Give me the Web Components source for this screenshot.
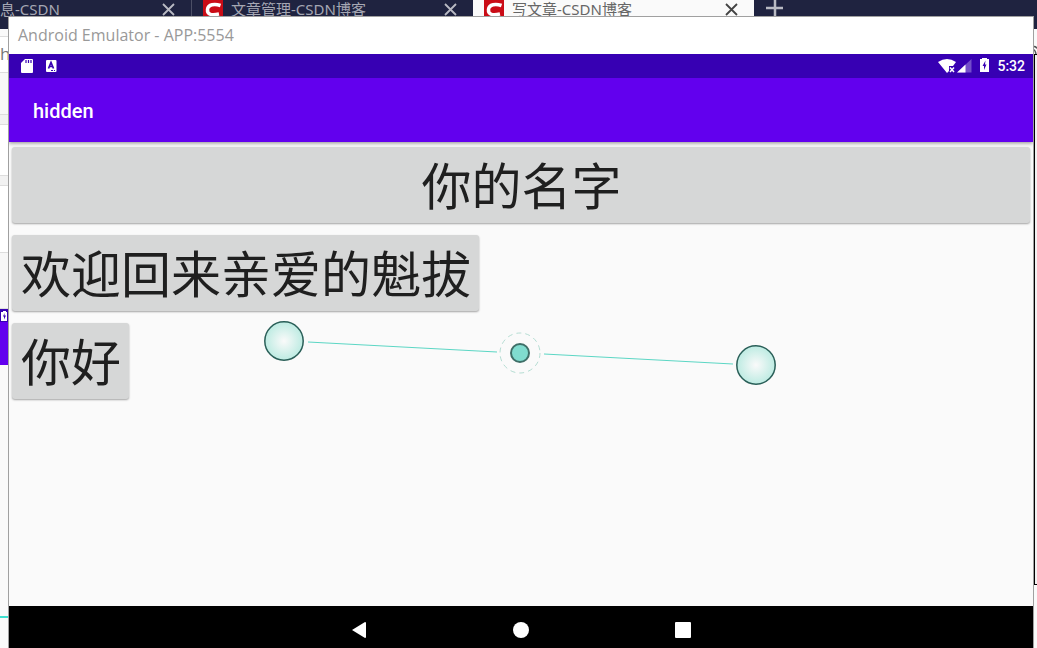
<!DOCTYPE html>
<html lang="zh-CN">
<head>
<meta charset="utf-8">
<title>Android Emulator</title>
<style>
    html, body {
        height: 100%;
        margin: 0;
    }
    body {
        position: relative;
        overflow: hidden;
        background: #fafafa;
        font-family: "Open Sans", "Noto Sans CJK SC", sans-serif;
    }
</style>
</head>
<body>
<browser-window>
    <browser-tab slot="tab" class="first">息-CSDN</browser-tab>
    <browser-tab slot="tab" icon>文章管理-CSDN博客</browser-tab>
    <browser-tab slot="tab" icon active>写文章-CSDN博客</browser-tab>
</browser-window>
<emulator-window caption="Android Emulator - APP:5554">
    <status-bar time="5:32"></status-bar>
    <app-bar>hidden</app-bar>
    <app-content>
        <android-button wide>你的名字</android-button>
        <android-button>欢迎回来亲爱的魁拔</android-button>
        <android-button>你好</android-button>
        <touch-points slot="overlay"></touch-points>
    </app-content>
    <nav-bar></nav-bar>
</emulator-window>

<script>
class BrowserTab extends HTMLElement {
    constructor() {
        super();
        this.attachShadow({ mode: 'open' });
        this.shadowRoot.innerHTML = `
            <style>
            :host {
                display: flex;
                box-sizing: border-box;
                align-items: center;
                width: 281px;
                height: 18px;
                padding: 0 15px 0 11px;
                color: #a5a7b3;
                font: 15px/18px "Noto Sans", "Noto Sans CJK SC", sans-serif;
                white-space: nowrap;
            }
            :host(.first) {
                width: 192px;
                padding-left: 0;
                border-right: 1px solid #4c4f66;
            }
            :host([active]) {
                height: 29px;
                padding-bottom: 11px;
                background: #fafafa;
                color: #666;
            }
            .favicon {
                flex: none;
                margin-right: 8px;
            }
            .label {
                flex: 1;
            }
            button {
                display: flex;
                padding: 0;
                border: 0;
                background: none;
                color: #b9bac3;
            }
            :host([active]) button {
                color: #444;
            }
            </style>
            ${this.hasAttribute('icon') ? `
            <svg class="favicon" width="20" height="20" viewBox="0 0 20 20">
                <rect width="20" height="20" fill="#ca0c16"/>
                <path d="M17.500 6.500C12 4.500 5 5 4.500 10.500C4 16 9 16.500 16 15" fill="none" stroke="#fff" stroke-width="3.500"/>
            </svg>` : ''}
            <span class="label"><slot></slot></span>
            <button aria-label="关闭">
                <svg width="16" height="16" viewBox="0 0 16 16">
                    <path d="M3 3L14 14M14 3L3 14" stroke="currentColor" stroke-width="1.800"/>
                </svg>
            </button>
        `;
    }
}
customElements.define('browser-tab', BrowserTab);

class BrowserWindow extends HTMLElement {
    constructor() {
        super();
        this.attachShadow({ mode: 'open' });
        this.shadowRoot.innerHTML = `
            <style>
            :host {
                display: flex;
                flex-direction: column;
                height: 100%;
            }
            .tabs {
                display: flex;
                height: 29px;
                background: #1f2340;
            }
            .add {
                align-self: flex-start;
                margin-left: 11px;
                padding: 0;
                border: 0;
                background: none;
                color: #b9bac3;
            }
            .add svg {
                display: block;
            }
            .page {
                display: flex;
                flex: 1;
                justify-content: space-between;
            }
            .left {
                width: 9px;
                overflow: hidden;
            }
            .left div {
                box-sizing: border-box;
                border-bottom: 1px solid #ddd;
            }
            .gap { height: 8px; }
            .address {
                height: 36px;
                background: #fff;
                color: #777;
                font-size: 17px;
                line-height: 34px;
            }
            .menu { height: 42px; background: #f8f8f8; }
            .rule { height: 10px; background: #f2f2f2; }
            .title { height: 51px; background: #fff; }
            .editor { height: 67px; background: #fff; }
            .tools { height: 56px; background: #f7f7f7; }
            .left .thumb {
                height: 56px;
                border: 0;
                border-top: 13px solid #3700b3;
                background: #6200ee;
            }
            .left .thumb svg {
                display: block;
                margin-top: -12px;
            }
            .left .end {
                height: 253px;
                border-bottom: 2px solid #40e0d0;
            }
            .right {
                width: 3px;
                overflow: hidden;
            }
            .right svg {
                display: block;
                margin-top: 16px;
            }
            .preview {
                height: 531px;
                box-sizing: border-box;
                border: solid #000;
                border-width: 1px 0 1px 1px;
                background: #f2f2f2;
            }
            </style>
            <div class="tabs">
                <slot name="tab"></slot>
                <button class="add" aria-label="新标签页">
                    <svg width="18" height="18" viewBox="0 0 18 18">
                        <path d="M1 8H18M10 0V16" stroke="currentColor" stroke-width="2.500"/>
                    </svg>
                </button>
            </div>
            <div class="page">
                <div class="left">
                    <div class="gap"></div>
                    <div class="address">h</div>
                    <div class="menu"></div>
                    <div class="rule"></div>
                    <div class="title"></div>
                    <div class="rule"></div>
                    <div class="editor"></div>
                    <div class="tools"></div>
                    <div class="thumb">
                        <svg width="8" height="12" viewBox="0 0 8 12">
                            <path d="M1 2H3V1H6V2H7V11H1Z" fill="#fff"/>
                            <path d="M4.500 3L3 6.500H4V9.500L6 5.500H4.500Z" fill="#3700b3"/>
                        </svg>
                    </div>
                    <div class="end"></div>
                </div>
                <div class="right">
                    <svg width="3" height="9" viewBox="0 0 3 9">
                        <path d="M0 1.500Q2 1.500 3 3.500M0 5Q1 5 2 9" fill="none" stroke="#555" stroke-width="1.500"/>
                    </svg>
                    <div class="preview"></div>
                </div>
            </div>
        `;
    }
}
customElements.define('browser-window', BrowserWindow);

// floats above the browser, the lower edge runs off the screen
class EmulatorWindow extends HTMLElement {
    constructor() {
        super();
        this.attachShadow({ mode: 'open' });
        this.shadowRoot.innerHTML = `
            <style>
            :host {
                position: absolute;
                inset: 16px 3px 0 8px;
                display: flex;
                flex-direction: column;
                border: 1px solid #a0a0a0;
                border-bottom: 0;
                background: #fff;
            }
            .caption {
                padding: 0 9px;
                color: #999;
                font-size: 16px;
                line-height: 37px;
            }
            </style>
            <div class="caption"></div>
            <slot></slot>
        `;
        this.shadowRoot.querySelector('.caption').textContent = this.getAttribute('caption');
    }
}
customElements.define('emulator-window', EmulatorWindow);

class StatusBar extends HTMLElement {
    constructor() {
        super();
        this.attachShadow({ mode: 'open' });
        this.shadowRoot.innerHTML = `
            <style>
            :host {
                display: flex;
                align-items: center;
                height: 24px;
                padding: 0 8px 0 12px;
                background: #3700b3;
                color: #fff;
                font: 500 14px/24px Roboto, sans-serif;
            }
            .notices {
                display: flex;
                flex: 1;
                gap: 12px;
            }
            .system {
                display: flex;
                gap: 1px;
                margin-right: 7px;
            }
            </style>
            <div class="notices">
                <svg width="12" height="14" viewBox="0 0 12 14">
                    <path d="M4 0H11Q12 0 12 1V13Q12 14 11 14H1Q0 14 0 13V4Z" fill="#fff"/>
                    <path d="M5 1V4M7.500 1V4M10 1V4" stroke="#3700b3" stroke-width="1.200"/>
                </svg>
                <svg width="12" height="14" viewBox="0 0 12 14">
                    <rect x="1" y="1" width="10.500" height="12" rx="1" fill="#fff"/>
                    <path d="M3.500 9.500L6 3.500L8.500 9.500M4.500 7.500H7.500" fill="none" stroke="#3700b3" stroke-width="1.700"/>
                    <path d="M6 11.500H8M9 11.500H10" stroke="#3700b3"/>
                </svg>
            </div>
            <div class="system">
                <svg width="18" height="16" viewBox="0 0 18 16">
                    <path d="M0 4Q9 -2 18 4L15 8H11V13L9 15Z" fill="#fff"/>
                    <path d="M12 9.500L16 14M16 9.500L12 14" stroke="#fff" stroke-width="1.500"/>
                </svg>
                <svg width="15" height="16" viewBox="0 0 15 16">
                    <path d="M0 14.500L14.500 1V14.500Z" fill="#fff" opacity=".3"/>
                    <path d="M0 14.500L8.500 6.500V14.500Z" fill="#fff"/>
                </svg>
                <svg width="17" height="16" viewBox="0 0 17 16">
                    <path d="M7 1H9V0H14V1H16V14H7Z" fill="#fff"/>
                    <path d="M12.500 2.500L9.500 8H11V12L13.500 6.500H12Z" fill="#3700b3"/>
                </svg>
            </div>
            <span class="time"></span>
        `;
        this.shadowRoot.querySelector('.time').textContent = this.getAttribute('time');
    }
}
customElements.define('status-bar', StatusBar);

class AppBar extends HTMLElement {
    constructor() {
        super();
        this.attachShadow({ mode: 'open' });
        this.shadowRoot.innerHTML = `
            <style>
            :host {
                position: relative;
                z-index: 1;
                display: block;
                height: 64px;
                padding: 0 24px;
                background: #6200ee;
                box-shadow: 0 1px 4px rgba(0, 0, 0, 0.45);
                clip-path: inset(0 0 -8px 0);
                color: #fff;
                font: 500 20px/66px Roboto, sans-serif;
            }
            </style>
            <slot></slot>
        `;
    }
}
customElements.define('app-bar', AppBar);

class AppContent extends HTMLElement {
    constructor() {
        super();
        this.attachShadow({ mode: 'open' });
        this.shadowRoot.innerHTML = `
            <style>
            :host {
                position: relative;
                display: flex;
                flex: 1;
                flex-direction: column;
                align-items: flex-start;
                gap: 12px;
                padding: 5px 3px;
                background: #fafafa;
            }
            </style>
            <slot></slot>
            <slot name="overlay"></slot>
        `;
    }
}
customElements.define('app-content', AppContent);

class AndroidButton extends HTMLElement {
    constructor() {
        super();
        this.attachShadow({ mode: 'open' });
        this.shadowRoot.innerHTML = `
            <style>
            :host {
                display: block;
            }
            :host([wide]) {
                align-self: stretch;
            }
            button {
                display: block;
                width: 100%;
                padding: 0 8px 4px 9px;
                border: 0;
                border-radius: 3px;
                background: #d6d7d7;
                box-shadow: 0 1px 2px rgba(0, 0, 0, 0.35);
                color: #1f1f1f;
                font: 50px/72px "Noto Sans CJK SC", sans-serif;
                white-space: nowrap;
            }
            </style>
            <button><slot></slot></button>
        `;
    }
}
customElements.define('android-button', AndroidButton);

// two finger handles joined through their pivot
class TouchPoints extends HTMLElement {
    constructor() {
        super();
        this.attachShadow({ mode: 'open' });
        this.shadowRoot.innerHTML = `
            <style>
            :host {
                position: absolute;
                top: 178px;
                left: 254px;
            }
            svg {
                display: block;
            }
            </style>
            <svg width="514" height="66" viewBox="0 0 514 66">
                <defs>
                    <radialGradient id="glow">
                        <stop offset="0" stop-color="#fafafa"/>
                        <stop offset="1" stop-color="#bdebe2"/>
                    </radialGradient>
                </defs>
                <path d="M45 22L234 32M281 34L470 44" stroke="#5cd6c4" stroke-width="1.200"/>
                <g fill="url(#glow)" stroke="#2a5f58" stroke-width="1.500">
                    <circle cx="21" cy="21" r="19.200"/>
                    <circle cx="493" cy="45" r="19.200"/>
                </g>
                <circle cx="257" cy="33" r="20" fill="none" stroke="#b5ddd3" stroke-dasharray="5 4"/>
                <circle cx="257" cy="33" r="9" fill="#80dccf" stroke="#3f6f68" stroke-width="2"/>
            </svg>
        `;
    }
}
customElements.define('touch-points', TouchPoints);

class NavBar extends HTMLElement {
    constructor() {
        super();
        this.attachShadow({ mode: 'open' });
        this.shadowRoot.innerHTML = `
            <style>
            :host {
                display: flex;
                justify-content: center;
                gap: 114px;
                height: 42px;
                background: #000;
            }
            button {
                width: 48px;
                height: 48px;
                padding: 0;
                border: 0;
                background: none;
            }
            svg {
                display: block;
                margin: auto;
                fill: #fff;
            }
            </style>
            <button aria-label="Back">
                <svg width="18" height="18" viewBox="0 0 18 18"><path d="M2 9L15 1Q16 1 16 2V16Q16 17 15 17Z"/></svg>
            </button>
            <button aria-label="Home">
                <svg width="18" height="18" viewBox="0 0 18 18"><circle cx="9" cy="9" r="8"/></svg>
            </button>
            <button aria-label="Overview">
                <svg width="18" height="18" viewBox="0 0 18 18"><rect x="1" y="1" width="16" height="16" rx="1"/></svg>
            </button>
        `;
    }
}
customElements.define('nav-bar', NavBar);
</script>
</body>
</html>
